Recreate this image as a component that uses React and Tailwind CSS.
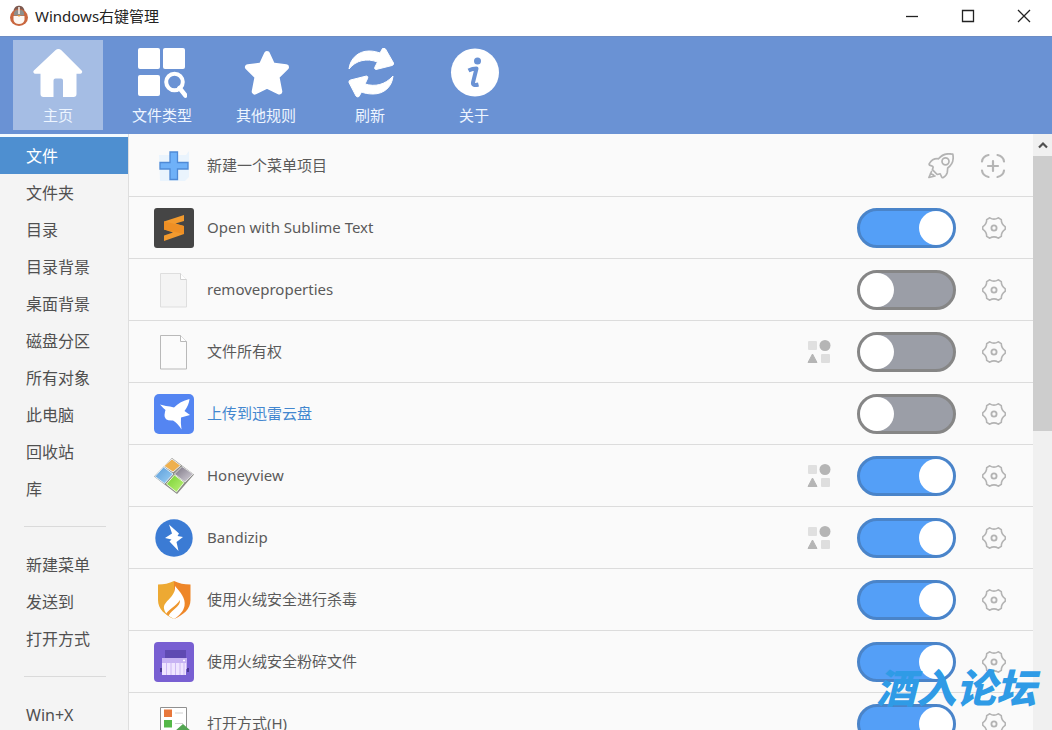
import React, { useState } from 'react';
import clsx from 'clsx';

const FONT = "font-['Noto_Sans','Noto_Sans_CJK_SC',sans-serif]";

/* Toolbar icons */
function HomeIcon() {
  return (
    <svg viewBox="0 0 50 50" className="size-[50px]" fill="currentColor" aria-hidden="true">
      <path d="M22.4 2.2a5 5 0 0 1 6 0L48.600 22.400a2 2 0 0 1-1.500 3.400H43.500V46a3 3 0 0 1-3 3H30V32.500a2 2 0 0 0-2-2h-5.500a2 2 0 0 0-2 2V49h-10a3 3 0 0 1-3-3V25.800H2.400a2 2 0 0 1-1.500-3.400Z" />
    </svg>
  );
}

function FileTypeIcon() {
  return (
    <svg viewBox="0 0 50 50" className="size-[50px]" fill="currentColor" aria-hidden="true">
      <rect x="1" y="0" width="22" height="21" rx="2" />
      <rect x="26" y="0" width="22" height="21" rx="2" />
      <rect x="1" y="27" width="22" height="21" rx="2" />
      <circle cx="37.500" cy="34" r="8.300" fill="none" stroke="currentColor" strokeWidth="4" />
      <path d="m42.500 40 6 7.500" stroke="currentColor" strokeWidth="4.500" strokeLinecap="round" />
    </svg>
  );
}

function StarIcon() {
  return (
    <svg viewBox="0 0 50 50" className="size-[50px]" fill="currentColor" stroke="currentColor" strokeWidth="6" strokeLinejoin="round" aria-hidden="true">
      <path d="m26 6 5.300 11.500L45 19.200 35.400 28.500 38.300 43.500 26 37.500 13.700 43.500 16.600 28.500 7 19.200 20.700 17.500Z" />
    </svg>
  );
}

function RefreshIcon() {
  return (
    <svg viewBox="0 0 50 50" className="size-[50px]" fill="currentColor" stroke="currentColor" strokeWidth="1" strokeLinejoin="round" aria-hidden="true">
      <path d="M4 21C5 11 13 3 24 3c5 0 8 1 11 2l2.500-4.500q1.500-1 3 .5L48.500 15q.500 2-1.500 2.500L31 21.500q-2-.5-1.200-2.200l2.700-5.300C22 10 11 12 4 21Z" />
      <path d="M48 28c-1 11-9 18-20 18-5 0-9-1-11.500-2L14 48.500q-1.500 1-3-.5L4 34.500q-.5-2 1.500-2.500l16-4q2 .5 1.200 2.200L20 36c10 3 20 1 28-8Z" />
    </svg>
  );
}

function AboutIcon() {
  return (
    <svg viewBox="0 0 50 50" className="size-[50px]" aria-hidden="true">
      <circle cx="26" cy="24.500" r="24" fill="currentColor" />
      <circle cx="28.500" cy="13" r="3.500" fill="#6a92d4" />
      <path d="M19.500 22.500q4-2 8-2l-3.500 14q-.6 3.500 5.500 2" fill="none" stroke="#6a92d4" strokeWidth="4" strokeLinejoin="round" />
    </svg>
  );
}

/* Action icons on the right of each row */
function GearIcon() {
  return (
    <svg viewBox="0 0 24 24" className="size-6" fill="none" stroke="#b3b3b3" strokeWidth="1.600" strokeLinejoin="round" aria-hidden="true">
      <path d="M16.200 1.800Q12 4.500 7.800 1.800L4.700 3.600Q4.800 8 .9 10.600Q.4 12 .9 13.400Q4.800 16 4.700 20.400L7.800 22.200Q12 19.500 16.200 22.200L19.300 20.400Q19.200 16 23.100 13.400Q23.600 12 23.100 10.600Q19.200 8 19.300 3.600Z" />
      <circle cx="12" cy="12" r="2.600" strokeWidth="1.800" />
    </svg>
  );
}

function ShapesIcon() {
  return (
    <svg viewBox="0 0 24 24" className="size-6" aria-hidden="true">
      <rect x="1" y="1" width="9" height="9" rx="1" fill="#e0e0e0" />
      <circle cx="18" cy="5.500" r="5.500" fill="#b5b5b5" />
      <path d="M5.500 14 10 22.500H1Z" fill="#b5b5b5" stroke="#b5b5b5" strokeLinejoin="round" />
      <rect x="14" y="14" width="9" height="9" rx="1" fill="#dedede" />
    </svg>
  );
}

function RocketIcon() {
  return (
    <svg viewBox="0 0 26 26" className="size-[26px]" fill="none" stroke="#b3b3b3" strokeWidth="1.700" strokeLinejoin="round" strokeLinecap="round" aria-hidden="true">
      <path d="M24.800 1.200C20 .2 14.500.8 10.500 5.800 6.500 5.300 3.500 7 1.300 10.600q-.5 1.400 1 1.800l2.200.8q.8.500.5 1.500l-.6 2 4.800 4.800 2.200-.5q1-.2 1.300.8l.8 2q.5 1.300 1.800.6 3.500-2 4-5l.4-4.400C24.500 11.500 25.800 6 24.800 1.200Z" />
      <circle cx="17.500" cy="8.300" r="3.500" />
      <path d="M3.500 18.500.9 24.500 7 23M2.500 20.500l3 1.500" />
    </svg>
  );
}

function AddTargetIcon() {
  return (
    <svg viewBox="0 0 26 26" className="size-[26px]" fill="none" stroke="#b5b5b5" strokeWidth="2.200" strokeLinecap="round" aria-hidden="true">
      <path d="M2 8.500q.5-5 6.500-6.500M17.500 2q6 1.500 6.500 6.500M24 17.500q-.5 5-6.500 6.500M8.500 24q-6-1.500-6.500-6.500M13 8v10M8 13h10" />
    </svg>
  );
}

/* Menu item icons */
function PlusIcon() {
  return (
    <svg viewBox="0 0 40 40" className="size-10" aria-hidden="true">
      <path d="M5 9h27l3-4v26l-4 4H6Z" fill="#eaf4fd" />
      <path d="M16 6h7.500v10.500H34V23H23.500v10.500H16V23H6v-6.500h10Z" fill="#6fb1f8" stroke="#4f8ad6" strokeWidth="1.300" />
    </svg>
  );
}

function SublimeIcon() {
  return (
    <svg viewBox="0 0 40 40" className="size-10" aria-hidden="true">
      <rect width="40" height="40" rx="3" fill="#454545" />
      <path d="M30 7 10 13.500v8l9 3-9 3V33l20-7v-8l-8.500-2.500L30 13Z" fill="#f29a2e" />
      <path d="M10 13.500v8l20 4.500v-8Z" fill="#ee8f24" />
    </svg>
  );
}

function FileIcon({ faded }) {
  return (
    <svg viewBox="0 0 40 40" className="size-10" aria-hidden="true">
      <path d="M6.500 3.500h20l6 6V37h-26Z" fill={faded ? '#f4f4f4' : '#fbfbfb'} stroke={faded ? '#dedede' : '#b9b9b9'} />
      <path d="M26.500 3.500v6h6" fill="#fff" stroke={faded ? '#d2d2d2' : '#b9b9b9'} />
    </svg>
  );
}

function XunleiIcon() {
  return (
    <svg viewBox="0 0 40 40" className="size-10" aria-hidden="true">
      <rect width="40" height="40" rx="5" fill="#5485f2" />
      <path d="M6 10.500 12 12q4 0 8 1.500C24 9.500 29 6.500 35.500 5q-.5 6-5 12l5.500 4-9 2.500q-.5 5 .5 12Q23.500 29 19 26.500 10 27 10.500 21q.5-4 1-5Q9 14 6 10.500Z" fill="#fff" />
    </svg>
  );
}

function HoneyviewIcon() {
  return (
    <svg viewBox="0 0 40 40" className="size-10" aria-hidden="true">
      <defs>
        <linearGradient id="hv-blue" x2="1" y2="1"><stop stopColor="#5a9bd8" /><stop offset="1" stopColor="#9bd0f5" /></linearGradient>
        <linearGradient id="hv-grey" x2="1" y2="1"><stop stopColor="#77717f" /><stop offset="1" stopColor="#d9d5dd" /></linearGradient>
        <linearGradient id="hv-green" x2="1" y2="1"><stop stopColor="#76cf2f" /><stop offset="1" stopColor="#bdf37b" /></linearGradient>
      </defs>
      <path d="M18 2 40 18.500 23 38 0 20.500Z" fill="#8b8b87" />
      <path d="m18 3 8.500 6.500L19 16l-9-6Z" fill="#eeb04e" stroke="#eee" />
      <path d="m28 10.500 11 7.500-8 8-10.500-8Z" fill="url(#hv-grey)" stroke="#ddd" />
      <path d="m9.500 11 9.500 7-8.500 9.500L1 20.500Z" fill="url(#hv-blue)" stroke="#ddeefa" />
      <path d="m20.500 19 9.500 7.500-7.500 9.500-10-8Z" fill="url(#hv-green)" stroke="#e7f9d3" />
    </svg>
  );
}

function BandizipIcon() {
  return (
    <svg viewBox="0 0 40 40" className="size-10" aria-hidden="true">
      <circle cx="20" cy="20" r="18.700" fill="#3b7bd4" />
      <path d="M15 6.500 25 15.500 23.500 18 29 19 22.500 24 24.500 33 15.500 23.500 17.500 21.500 11 20 18 15.500Z" fill="#fff" />
    </svg>
  );
}

function ShieldIcon() {
  return (
    <svg viewBox="0 0 40 40" className="size-10" aria-hidden="true">
      <path d="M20 1c-5 2.500-10 3.500-16 3.500V20c0 9 7 15 16 19Z" fill="#eda933" />
      <path d="M20 1c5 2.500 10 3.500 16.500 3.500V20c0 9-7 15-16.500 19Z" fill="#ee8628" />
      <path d="M21 6c5 6 11 12 9.500 20-1 5-5 9.500-10.500 13-5.500-3-9.500-6-10-10.500C9 21 22 17.500 21 6Z" fill="#fff" />
      <path d="M26 20c.5 7-8 9-11.500 16l-2.500-2c3-5 9-7 14-14Z" fill="#ee972e" />
    </svg>
  );
}

function ShredderIcon() {
  return (
    <svg viewBox="0 0 40 40" className="size-10" aria-hidden="true">
      <rect width="40" height="40" rx="4" fill="#785fd2" />
      <rect x="11" y="8" width="21" height="9" fill="#5f4ab2" />
      <path d="M8 16h25v11H8Z" fill="#c7b3f3" />
      <path d="M6 28h2M33 28h2" stroke="#4a3894" strokeWidth="4" />
      <path d="M8 21h24v12H8Z" fill="#efe5ff" />
      <path d="M12.500 21v12M17 21v12M21.500 21v12M26 21v12M30 21v12" stroke="#cdb8f4" />
      <path d="M29 18.500h2" stroke="#fff" strokeWidth="1.500" />
    </svg>
  );
}

function OpenWithIcon() {
  return (
    <svg viewBox="0 0 40 40" className="size-10" aria-hidden="true">
      <path d="M6.500 3.500h26V37h-26Z" fill="#fff" stroke="#909090" />
      <rect x="10" y="5.500" width="8" height="7.500" fill="#e8783c" />
      <rect x="10" y="16" width="8" height="7.500" fill="#55b848" />
      <rect x="10" y="26.500" width="8" height="7.500" fill="#4a8ad4" />
      <path d="M21 9h8M21 19.500h8" stroke="#d0d0d0" />
      <path d="m29 20 8 7h-4v8h-8v-8h-4Z" fill="#53a552" />
    </svg>
  );
}

function AppLogo() {
  return (
    <svg viewBox="0 0 20 22" className="h-[22px] w-5" aria-hidden="true">
      <path d="M4.500 6C5 2 8 .8 10 .8S15 2 15.500 6" fill="#7d5a50" />
      <ellipse cx="10" cy="12.500" rx="9" ry="8.500" fill="#c9673f" />
      <path d="M4.500 11h11v4q-1 4-5.500 4t-5.500-4Z" fill="#fdf8f3" />
      <path d="M5 10.500Q4.500 5 8.500 5L10 6.500 11.500 5Q15.500 5 15 10.500Z" fill="#8d8f8d" />
      <path d="M10 2v7" stroke="#f3ede8" strokeWidth="1.600" />
      <path d="m8.300 10 1.700 2 1.700-2Z" fill="#e39a3c" />
    </svg>
  );
}

const tabs = [
  { title: '主页', icon: HomeIcon },
  { title: '文件类型', icon: FileTypeIcon },
  { title: '其他规则', icon: StarIcon },
  { title: '刷新', icon: RefreshIcon },
  { title: '关于', icon: AboutIcon },
];

const sideGroups = [
  ['文件', '文件夹', '目录', '目录背景', '桌面背景', '磁盘分区', '所有对象', '此电脑', '回收站', '库'],
  ['新建菜单', '发送到', '打开方式'],
  ['Win+X'],
];

const menuItems = [
  { title: 'Open with Sublime Text', icon: <SublimeIcon />, on: true },
  { title: 'removeproperties', icon: <FileIcon faded />, on: false },
  { title: '文件所有权', icon: <FileIcon />, on: false, group: true },
  { title: '上传到迅雷云盘', icon: <XunleiIcon />, on: false, selected: true },
  { title: 'Honeyview', icon: <HoneyviewIcon />, on: true, group: true },
  { title: 'Bandizip', icon: <BandizipIcon />, on: true, group: true },
  { title: '使用火绒安全进行杀毒', icon: <ShieldIcon />, on: true },
  { title: '使用火绒安全粉碎文件', icon: <ShredderIcon />, on: true },
  { title: '打开方式(H)', icon: <OpenWithIcon />, on: true },
];

function Row({ children }) {
  return (
    <li className="flex h-[62px] items-center gap-[26px] border-b border-[#dcdcdc] pt-px pr-[27px] pl-[25px]">
      {children}
    </li>
  );
}

function MenuRow({ item }) {
  const [on, setOn] = useState(item.on);

  return (
    <Row>
      <label className={clsx('flex flex-1 items-center gap-[13px] text-[15px] leading-5', item.selected ? 'text-[#4387cf]' : 'text-[#5a5a5a]')}>
        {item.icon}
        <span className="flex-1 pb-0.5">{item.title}</span>
        {item.group && <span className="mr-[13px]"><ShapesIcon /></span>}
        <input
          type="checkbox"
          checked={on}
          onChange={() => setOn(!on)}
          className="h-10 w-[99px] appearance-none rounded-full border-3 border-[#868686] bg-[#9b9ea7] before:block before:size-[34px] before:rounded-full before:bg-white checked:border-[#4a84c9] checked:bg-[#549ff7] checked:before:ml-auto"
        />
      </label>
      <button type="button" aria-label="设置"><GearIcon /></button>
    </Row>
  );
}

export default function App() {
  const [tab, setTab] = useState('主页');
  const [scene, setScene] = useState('文件');

  return (
    <div className={clsx('relative flex h-screen flex-col overflow-hidden bg-[#fafafa]', FONT)}>
      {/* Title bar */}
      <header className="flex h-9 shrink-0 items-center justify-between bg-white pr-5 pb-1 pl-[9px]">
        <div className="flex items-center gap-[6px]">
          <AppLogo />
          <h1 className="text-[15px] leading-5 text-[#222]">Windows右键管理</h1>
        </div>
        <div className="flex gap-10 text-[#222]">
          <button type="button" aria-label="最小化">
            <svg viewBox="0 0 16 16" className="size-4" stroke="currentColor" strokeWidth="1.300"><path d="M2 8.500h12" /></svg>
          </button>
          <button type="button" aria-label="最大化">
            <svg viewBox="0 0 16 16" className="size-4" fill="none" stroke="currentColor" strokeWidth="1.300"><path d="M2.500 2.500h11v11h-11Z" /></svg>
          </button>
          <button type="button" aria-label="关闭">
            <svg viewBox="0 0 16 16" className="size-4" stroke="currentColor" strokeWidth="1.300"><path d="m2 2 12 12M14 2 2 14" /></svg>
          </button>
        </div>
      </header>

      {/* Toolbar */}
      <nav className="flex h-[98px] shrink-0 gap-[14px] border-t border-[#6c8cc4] bg-[#6a92d4] pt-[3px] pl-[13px]">
        {tabs.map((t) => (
          <button
            key={t.title}
            type="button"
            onClick={() => setTab(t.title)}
            className={clsx('flex h-[90px] w-[90px] flex-col items-center gap-[7px] pt-2 text-white', tab === t.title && 'bg-[#a5bde4]')}
          >
            <t.icon />
            <span className="text-[15px] leading-5 text-[#edf5ff]">{t.title}</span>
          </button>
        ))}
      </nav>

      <div className="flex min-h-0 flex-1">
        {/* Sidebar */}
        <aside className="w-[129px] shrink-0 overflow-hidden border-r border-[#dedede] bg-[#f4f4f4]">
          <div className="border-t-3 border-[#f4fbff]">
            {sideGroups.map((group, index) => (
              <div key={index}>
                {index > 0 && (
                  <div className="flex h-[39px] items-center pr-[22px] pl-6">
                    <hr className="flex-1 border-[#dadada]" />
                  </div>
                )}
                {group.map((name) => (
                  <button
                    key={name}
                    type="button"
                    onClick={() => setScene(name)}
                    className={clsx('block h-[37px] w-full pl-[26px] text-left text-base', scene === name ? 'bg-[#4e8fd0] text-white' : 'text-[#505050]')}
                  >
                    {name}
                  </button>
                ))}
              </div>
            ))}
          </div>
        </aside>

        {/* Menu list */}
        <main className="min-w-0 flex-1 overflow-hidden pt-px">
          <ul>
            <Row>
              <div className="flex flex-1 items-center gap-[13px] text-[15px] leading-5 text-[#5a5a5a]">
                <PlusIcon />
                <span className="pb-0.5">新建一个菜单项目</span>
              </div>
              <button type="button" aria-label="运行"><RocketIcon /></button>
              <button type="button" aria-label="添加"><AddTargetIcon /></button>
            </Row>
            {menuItems.map((item) => (
              <MenuRow key={item.title} item={item} />
            ))}
          </ul>
        </main>

        {/* Scrollbar */}
        <div className="flex w-[19px] shrink-0 flex-col bg-[#f0f0f0]">
          <button type="button" aria-label="向上滚动" className="flex h-[22px] items-center justify-center">
            <svg viewBox="0 0 10 8" className="h-2 w-[10px]" fill="none" stroke="#505050" strokeWidth="2.200"><path d="m1 6.500 4-4 4 4" /></svg>
          </button>
          <div className="h-[275px] bg-[#cdcdcd]" />
        </div>
      </div>

      <p className="pointer-events-none absolute right-4 bottom-5 text-[40px] leading-11 font-black text-[#2f9be6] italic">酒入论坛</p>
    </div>
  );
}
